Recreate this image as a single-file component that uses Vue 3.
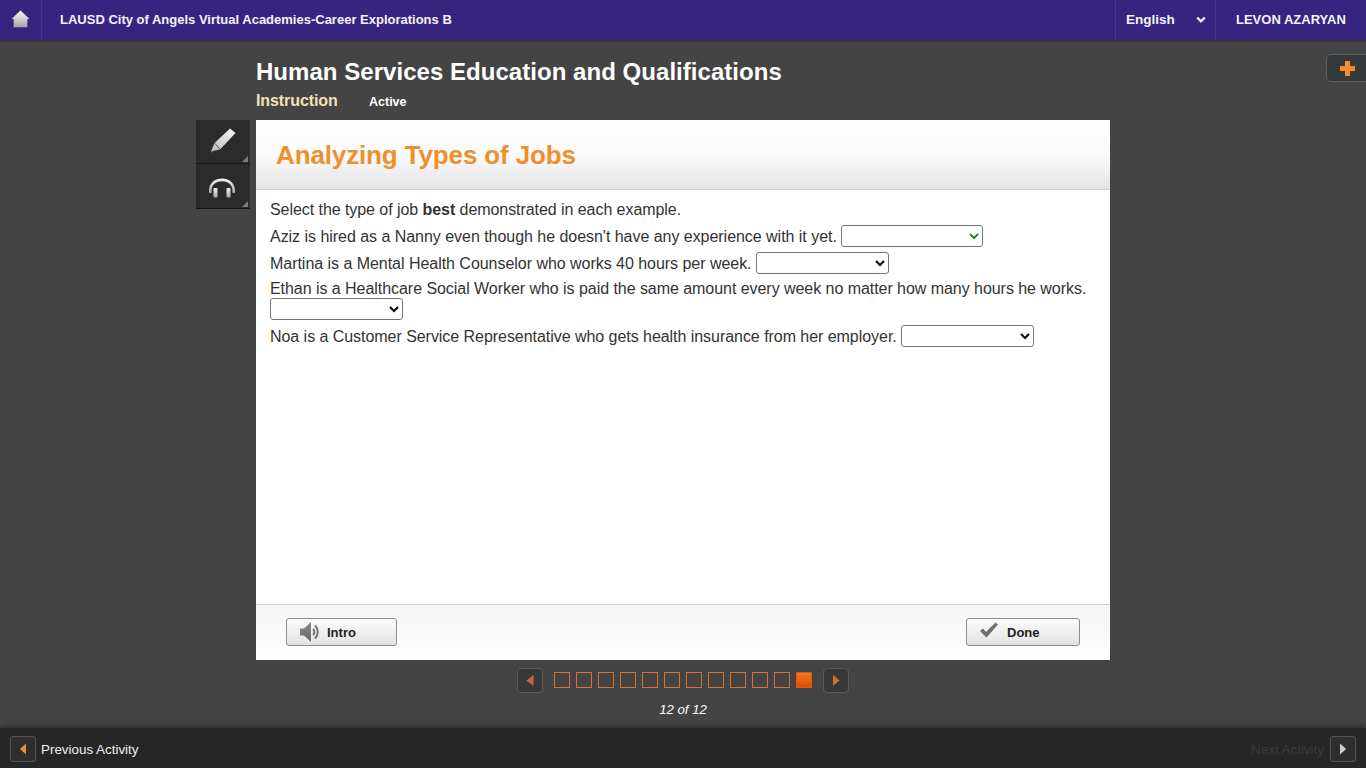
<script setup>
const squares = Array.from({ length: 12 }, (_, i) => i === 11)
</script>

<template>
  <div class="page">
    <header class="topbar">
      <a class="home">
        <svg width="19" height="18" viewBox="0 0 20 19"><defs><linearGradient id="hg" x1="0" y1="0" x2="0" y2="1"><stop offset="0" stop-color="#f6f6f6"/><stop offset="1" stop-color="#a6a6a6"/></linearGradient></defs><path d="M10 .5 19.500 9.500h-2.300v8.800H2.800V9.500H.5z" fill="url(#hg)"/></svg>
      </a>
      <div class="course">LAUSD City of Angels Virtual Academies-Career Explorations B</div>
      <div class="lang"><span>English</span>
        <svg width="10" height="8" viewBox="0 0 10 8"><path d="M1.200 1.500 5 5.300l3.800-3.800" fill="none" stroke="#f1eef8" stroke-width="2.400"/></svg>
      </div>
      <div class="user">LEVON AZARYAN</div>
    </header>

    <main class="main">
      <div class="plus-tab">
        <svg width="15" height="15" viewBox="0 0 15 15"><path d="M5 0h5v5h5v5h-5v5H5v-5H0V5h5z" fill="#f28d2c"/></svg>
      </div>

      <div class="stage">
        <div class="heading">
          <h1>Human Services Education and Qualifications</h1>
          <div class="sub"><span class="instr">Instruction</span><span class="active">Active</span></div>
        </div>

        <div class="tools">
          <div class="tool">
            <svg class="pencil" width="28" height="28" viewBox="0 0 28 28"><defs><linearGradient id="pg" x1="1" y1="0" x2="0" y2="1"><stop offset="0" stop-color="#f7f7f7"/><stop offset="1" stop-color="#b8b8b8"/></linearGradient></defs><path d="M21 1.500 26.500 6 11 22.500 3.500 24 2 26l.7-3.500L5.500 16z" fill="url(#pg)"/><path d="M5.500 16 11 22.500" stroke="#3a3a3a" stroke-width=".8"/></svg>
            <i class="corner"></i>
          </div>
          <div class="tool">
            <svg class="phones" width="26" height="20" viewBox="0 0 26 20"><defs><linearGradient id="hp" x1="0" y1="0" x2="0" y2="1"><stop offset="0" stop-color="#f4f4f4"/><stop offset="1" stop-color="#a4a4a4"/></linearGradient></defs><path d="M0 15v-2.500C0 5 6 .5 13 .5S26 5 26 12.500V15h-2.600v-2.500C23.400 6.700 19 3.300 13 3.300S2.600 6.700 2.600 12.500V15z" fill="url(#hp)"/><rect x="4.500" y="10" width="4" height="9.500" rx="1" fill="url(#hp)"/><rect x="17.500" y="10" width="4" height="9.500" rx="1" fill="url(#hp)"/></svg>
            <i class="corner"></i>
          </div>
        </div>

        <section class="card">
          <div class="card-head"><h2>Analyzing Types of Jobs</h2></div>
          <div class="card-body">
            <p class="line plain">Select the type of job <b>best</b> demonstrated in each example.</p>
            <p class="line">Aziz is hired as a Nanny even though he doesn't have any experience with it yet. <select class="sel sel-green"><option></option><option>Temporary</option></select></p>
            <p class="line">Martina is a Mental Health Counselor who works 40 hours per week. <select class="sel"><option></option><option>Full-time</option></select></p>
            <p class="line wrap">Ethan is a Healthcare Social Worker who is paid the same amount every week no matter how many hours he works. <select class="sel"><option></option><option>Salaried</option></select></p>
            <p class="line tight">Noa is a Customer Service Representative who gets health insurance from her employer. <select class="sel"><option></option><option>Benefits</option></select></p>
          </div>
          <div class="card-foot">
            <button class="btn btn-intro">
              <svg width="22" height="22" viewBox="0 0 22 22"><defs><linearGradient id="sp" x1="0" y1="0" x2="0" y2="1"><stop offset="0" stop-color="#8c8c8c"/><stop offset="1" stop-color="#666"/></linearGradient></defs><path d="M1 7.500h4L12 1v20l-7-6.500H1z" fill="url(#sp)"/><path d="M14 8a4 4 0 0 1 0 6" fill="none" stroke="#707070" stroke-width="2"/><path d="M16 4.500a9 9 0 0 1 0 13" fill="none" stroke="#707070" stroke-width="2"/></svg>
              <span>Intro</span>
            </button>
            <button class="btn btn-done">
              <svg class="check" width="20" height="17" viewBox="0 0 20 17"><path d="M1 9 4 6.500l3 3.500L16.500.5 19 2.500 7.500 15.500z" fill="#6e6e6e"/></svg>
              <span>Done</span>
            </button>
          </div>
        </section>

        <nav class="pager">
          <div class="arrow">
            <svg width="8" height="11" viewBox="0 0 8 11"><defs><linearGradient id="ar" x1="0" y1="0" x2="1" y2="0"><stop offset="0" stop-color="#c86a45"/><stop offset="1" stop-color="#d9601f"/></linearGradient></defs><path d="M7.500 0v11L.5 5.500z" fill="url(#ar)"/></svg>
          </div>
          <div class="squares">
            <span v-for="(on, i) in squares" :key="i" class="sq" :class="{ on }"></span>
          </div>
          <div class="arrow">
            <svg width="8" height="11" viewBox="0 0 8 11"><path d="M1 0v11L7.500 5.500z" fill="#d9701f"/></svg>
          </div>
        </nav>
        <div class="count">12 of 12</div>
      </div>
    </main>

    <footer class="bottombar">
      <div class="nav-left">
        <div class="nav-btn"><svg width="8" height="12" viewBox="0 0 8 12"><path d="M7 .5v11L.8 6z" fill="#ee8a2a"/></svg></div>
        <span class="prev">Previous Activity</span>
      </div>
      <div class="nav-right">
        <span class="next">Next Activity</span>
        <div class="nav-btn"><svg width="8" height="12" viewBox="0 0 8 12"><path d="M1 .5v11L7.200 6z" fill="#cfcfcf"/></svg></div>
      </div>
    </footer>
  </div>
</template>

<style>
html, body { margin: 0; background: #444; }
</style>

<style scoped>
.page {
  width: 1366px;
  height: 768px;
  display: flex;
  flex-direction: column;
  overflow: hidden;
  background: #444444;
  font-family: "Liberation Sans", Arial, sans-serif;
}
.topbar {
  height: 40px;
  flex: none;
  display: flex;
  align-items: stretch;
  background: #37247f;
  color: #f4f2fa;
  font-weight: 700;
  font-size: 13px;
  box-shadow: 0 1px 2px rgba(0,0,0,.35);
  position: relative;
}
.home {
  width: 41px;
  border-right: 1px solid #47358c;
  display: flex;
  align-items: center;
  justify-content: center;
  padding-bottom: 2px;
  box-sizing: content-box;
  height: 38px;
}
.course { flex: 1; padding-left: 18px; line-height: 40px; }
.lang {
  width: 101px;
  border-left: 1px solid #47358c;
  border-right: 1px solid #47358c;
  display: flex;
  align-items: center;
  justify-content: space-between;
  padding: 0 9px 1px 10px;
  box-sizing: border-box;
  font-size: 13.500px;
}
.user { width: 150px; padding-left: 20px; box-sizing: border-box; line-height: 40px; }

.main { flex: 1; position: relative; min-height: 0; }
.plus-tab {
  position: absolute;
  right: -1px;
  top: 14px;
  width: 41px;
  height: 28px;
  box-sizing: border-box;
  background: #36393b;
  border: 1px solid #5a5f62;
  border-radius: 5px 0 0 5px;
  display: flex;
  align-items: center;
  justify-content: center;
  padding-left: 2px;
}
.stage {
  display: grid;
  grid-template-columns: 54px 854px;
  column-gap: 6px;
  grid-template-rows: 80px 540px;
  margin-left: 196px;
  width: 914px;
}
.heading { grid-column: 2; grid-row: 1; color: #fff; padding-top: 17px; box-sizing: border-box; }
h1 { margin: 0; font-size: 24px; line-height: 30px; font-weight: 700; color: #fff; letter-spacing: .04px; }
.sub { display: flex; align-items: baseline; margin-top: 4px; line-height: 20px; }
.instr { font-size: 16px; font-weight: 700; color: #f4e3b4; width: 113px; letter-spacing: -.09px; }
.active { font-size: 12.500px; font-weight: 700; color: #fff; }

.tools { grid-column: 1; grid-row: 2; display: flex; flex-direction: column; }
.tool {
  position: relative;
  height: 44px;
  box-sizing: border-box;
  background: #2b2b2b;
  border-bottom: 1px solid #161616;
  display: flex;
  align-items: center;
  justify-content: center;
}
.tool + .tool { height: 45px; }
.pencil { margin-bottom: 1px; }
.phones { margin-top: 3px; margin-right: 2px; }
.corner {
  position: absolute;
  right: 2px;
  bottom: 1px;
  width: 0;
  height: 0;
  border-style: solid;
  border-width: 0 0 6px 6px;
  border-color: transparent transparent #7c7c7c transparent;
}
.card {
  grid-column: 2;
  grid-row: 2;
  display: flex;
  flex-direction: column;
  background: #fff;
}
.card-head {
  height: 70px;
  box-sizing: border-box;
  border-bottom: 1px solid #cfcfcf;
  background: linear-gradient(#ffffff 0%, #fbfbfb 50%, #e4e4e4 100%);
  display: flex;
  align-items: center;
  padding: 2px 0 0 20px;
}
h2 { margin: 0; font-size: 26px; font-weight: 700; color: #ef8f2d; letter-spacing: -.13px; }
.card-body { flex: 1; padding: 6px 14px 0; color: #333; font-size: 16px; letter-spacing: -.035px; }
.line { margin: 0; height: 27px; line-height: 27px; white-space: nowrap; }
.line.plain { letter-spacing: -.06px; }
.line.tight { letter-spacing: -.045px; }
.line.wrap { white-space: normal; height: 45px; box-sizing: content-box; padding-top: 1px; line-height: 21px; letter-spacing: -.047px; }
.sel {
  height: 22px;
  width: 133px;
  font-size: 13.333px;
  font-family: "Liberation Sans", Arial, sans-serif;
  background: #fff;
  border: 1px solid #767676;
  border-radius: 3px;
  color: #000;
  vertical-align: 2px;
}
.line.wrap .sel { display: block; margin-top: -1px; }
.sel-green { width: 142px; color: #1e8a1e; }
.card-foot {
  height: 56px;
  box-sizing: border-box;
  border-top: 1px solid #cfcfcf;
  background: linear-gradient(#f5f5f5, #ffffff);
  display: flex;
  align-items: center;
  justify-content: space-between;
  padding: 0 30px 2px;
}
.btn {
  height: 28px;
  box-sizing: border-box;
  display: flex;
  align-items: center;
  padding: 0;
  border: 1px solid #8d8d8d;
  border-radius: 3px;
  background: linear-gradient(#fbfbfb, #e3e3e3);
  font-family: inherit;
  font-weight: 700;
  font-size: 13px;
  color: #222;
}
.btn span { margin-top: 2px; }
.btn-intro { width: 111px; padding-left: 12px; gap: 6px; }
.btn-done { width: 114px; padding-left: 12px; gap: 8px; }
.check { margin-top: -3px; }
.pager {
  grid-column: 2;
  display: flex;
  align-items: center;
  justify-content: center;
  gap: 11px;
  margin-top: 8px;
  height: 24px;
}
.arrow {
  width: 26px;
  height: 25px;
  box-sizing: border-box;
  background: #383838;
  border: 1px solid #5c5c5c;
  border-radius: 4px;
  display: flex;
  align-items: center;
  justify-content: center;
}
.squares { display: flex; gap: 6px; }
.sq {
  width: 16px;
  height: 16px;
  box-sizing: border-box;
  border: 1px solid #d9722e;
}
.sq.on { border-color: #e65a10; background: linear-gradient(#f07a22, #dd4a08); }
.count {
  grid-column: 2;
  text-align: center;
  color: #fff;
  font-style: italic;
  font-size: 13.200px;
  line-height: 16px;
  margin-top: 10px;
}
.bottombar {
  flex: none;
  height: 40px;
  box-sizing: border-box;
  background: #262626;
  display: flex;
  align-items: center;
  justify-content: space-between;
  padding: 1px 10px 0;
  box-shadow: 0 -3px 4px rgba(0,0,0,.25);
  position: relative;
}
.nav-left, .nav-right { display: flex; align-items: center; gap: 5px; }
.nav-right { gap: 6px; }
.nav-btn {
  width: 26px;
  height: 26px;
  box-sizing: border-box;
  border: 1px solid #555;
  border-radius: 3px;
  background: #2e2e2e;
  display: flex;
  align-items: center;
  justify-content: center;
}
.prev { font-size: 13.400px; color: #eee; margin-top: 1px; }
.next { font-size: 13.400px; color: #3a3a3a; margin-top: 1px; }
</style>
